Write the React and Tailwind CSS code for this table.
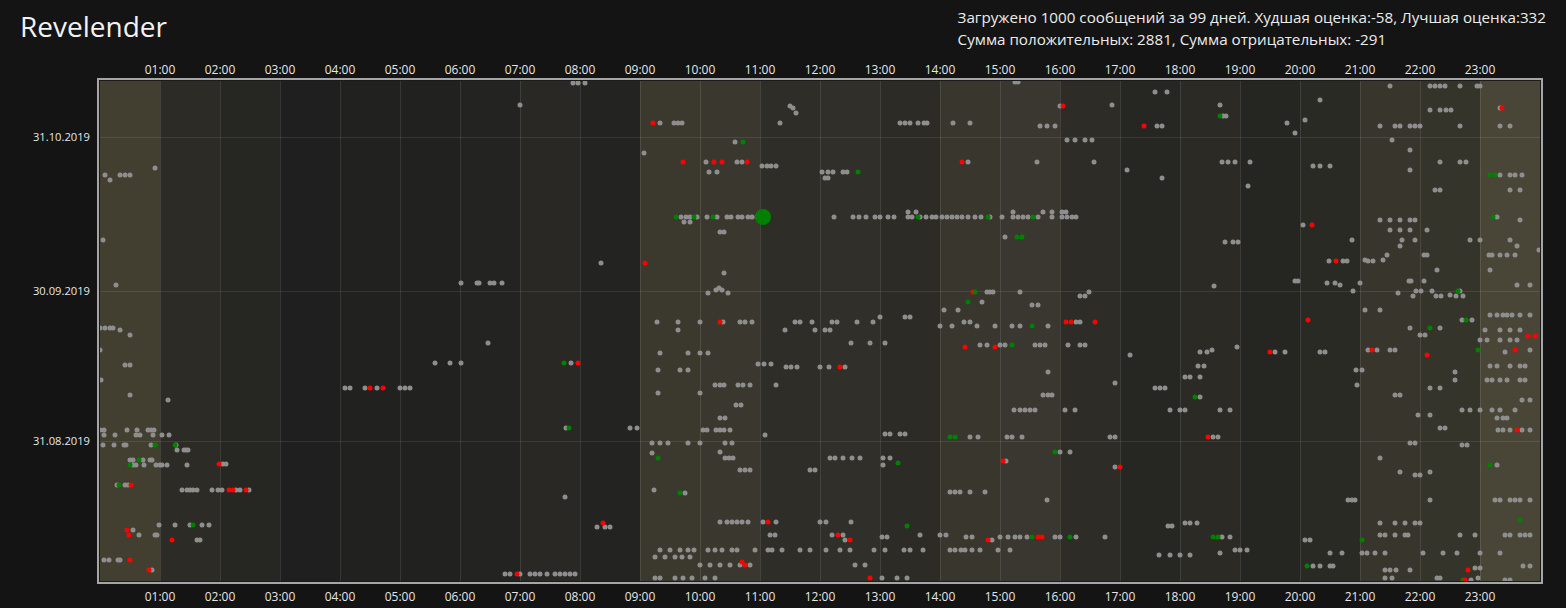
import React from "react";

const COLS = [
  "bg-[#423f31]", "bg-[#2c2b25]", "bg-[#262622]", "bg-[#1f1f1f]", "bg-[#212120]", "bg-[#212120]",
  "bg-[#232321]", "bg-[#292824]", "bg-[#232321]", "bg-[#3b392e]", "bg-[#3a382e]", "bg-[#2e2d28]",
  "bg-[#302f29]", "bg-[#2c2b26]", "bg-[#38362d]", "bg-[#393730]", "bg-[#2d2c27]", "bg-[#262622]",
  "bg-[#2b2a25]", "bg-[#252522]", "bg-[#2a2a25]", "bg-[#37352c]", "bg-[#35342b]", "bg-[#4a4637]",
];

const HOURS = Array.from({ length: 23 }, (_, i) => String(i + 1).padStart(2, "0") + ":00");

const ROWS = `
82: 1015 1018
83: 573 578 585
86: 1390 1430 1435 1440 1445 1460 1477 1480
92: 1155 1167
100: 1320
105: 520 1112 1220
106: 1060 r1063 790
108: 793 1500 r1502
110: 1430 1440 1446 1451
113: 796
116: g1220 1223 1226
120: 1305
123: r653 660 674 678 682 780 900 905 910 918 924 927 953 970 1287
126: 1040 1047 1055 r1144 1157 1162 1380 1395 1400 1410 1415 1420 1460 1500 1510
133: 1295
140: 1067 1075 1085 1092 1392
142: 735 g743
150: 1410
153: 644
162: r683 706 r714 r722 737 742 r747 r962 968 1037 1094 1222 1228 1235 1250 1440 1460 1466
166: 762 767 771 776 1313 1320 1330
168: 155
170: 1127 1410
172: 709 717 822 828 833 843 847 g858
175: 105 120 125 130 g1490 g1495 1500 1510 1515 1522
178: 825 828 1162
180: 110
186: 1248
190: 1435 1440 1510 1520
212: 1013 1043 1052 1062 1066 908 916
217: g676 681 686 690 g694 697 707 g713 717 727 731 738 742 748 752 757 834 853 859 866 875 880 888 894 908 912 g918 920 926 932 936 942 947 952 957 962 968 975 981 g988 990 1002 1013 1018 1023 1028 g1033 1038 1052 1062 1067 1072 1076 g1493 1497
220: 1380 1390 1400 1410 1415 1520
222: 684 690
225: 1303 r1312
230: 1390 1400 1410 1427
232: 720 724
237: 1005 g1017 g1022
240: 103 1352 1402 1415 1470 1480 1510
242: 1225 1233 1238
246: 1400 1517
250: 1539
255: 1387 1424 1427 1489 1492 1500 1507 1515
260: 1383 1365
261: 1329 r1336 1343 1347 1368 1373
263: 601 r645
270: 1437 1490
273: 724
281: 1295 1298 1409 1411 1424
283: 461 477 479 490 494 502 1327 1335 1360
285: 116 1517 1530 1340
286: 1214
288: 719
290: 716 722
291: 1353 1416 1421 1432 g1458 1460
292: 1089 r973 g975 987 990 993 1020
293: 708 728 1398
295: 1450
296: 1413 1436 1441 1456 1463 1085 1080
302: g968 982
305: 1032 1038
310: 944 958 1365 1380
315: 1490 1497 1503 1507 1512 1520 1530
317: 880 905 910
320: 1462 g1466 1472 r1308
322: 657 678 700 r720 723 740 745 752 795 800 812 832 837 857 873 964 970 r1066 r1071 1076 1080 r1095
326: 940 952 977 995 1012 1020 g1032 1048
328: 100 105 110 113 g1430 1440 1410
330: 120 678 785 815 825 830 1485 1500 1510 1520
335: 130 1420 1425
336: r1528 r1535
340: 1480 1487 1500 1510 1517
343: 488 851 870 885
345: 980 987 1000 1005 g1012 1035 1040 1045 1068 1080 1085
347: r965 r995 1237
350: 100 1212 1368 r1372 1377 1390 1395 g1478 1530 r1515
352: 1200 1207 r1270 1275 1285 1320 1325 1505
353: 660 688 700 708
355: r1427 1130
363: 435 450 461 g564 571 r578
364: 758 764 771
365: 125 130
366: 1198 1204 1490 1497 1510 1520 1525
367: 786 791 797 820 829 r840 845
370: 1356 1362 658 680 688
372: 1455 1048
377: 1185 1190 1200
380: 101 1455 1487 1492 1500 1507 1520 1525
383: 1115
385: 715 720 724 738 743 750 776 1357
388: 345 350 365 r370 377 r383 400 405 410 1155 1160 1165 1430 1440
393: 658 700
395: 130 1043 1048 1052 1395 1400
397: g1195 1200
400: 168 1522 1530
405: 736 741
410: 1014 1020 1025 1030 1035 1065 1075 1170 1180 1185 1220 1230 1462 1470 1480 1492 1500 1515
415: 1418 1430
418: 720 725 1497 1503 1507
428: 566 g569 630 637 1440 1445
430: 100 104 127 137 148 151 154 703 707 716 720 724 730 1498 1503 1510 r1517 1522 1530
434: 885 890 900 905
435: 104 115 136 140 153 162 169 765
437: g950 g955 970 978 1007 1012 1022 1110 1115 r1208 1213 1218
443: 652 660 668 688 700 725 732 1410 1415
445: 103 114 124 126 151 g155 g175 176 1462 1467
450: 177 184 186 188
452: g1055 1060 1070 720
453: 652
458: g658 725 729 733 830 835 843 852 860 883 890 1380
460: 130 133 g139 143 150 152
461: r1003 1006
463: g898
464: r219 223 226
465: g130 133 136 144 156 160 162 167 187 883 g1490 1497
467: 1115 r1120
470: 740 745 750 810 815
472: 1400 1430
475: 1415 1420
485: 117 g119 125 128 r131
490: 182 187 190 193 197 212 218 222 r229 r233 236 240 r246 249 654
492: 950 955 960 970 985
493: g680 685
497: 565
500: 1348 1352 1355 1430 1495 1500 1510 1515 1520 1530 1047
520: g1520
522: 720 727 732 737 742 748 763 r768 776 820 826 851
523: r603 1185 1190 1197 1380 1395 1405 1415 1420
525: 159 175 190 g193 202 209
526: 1168 1172 g907
527: 597 605 610
530: r127 133
535: r129 139 155 157 770 775 832 r838 843 920 940 946 1380 1385 1395 1405 1408 1460 1475 1505 1510 1520 1525 1530
537: 882 887 966 972 1000 1008 1015 1020 1027 g1032 r1038 r1042 1055 1060 g1070 1076 1105 g1213 g1218 1222 1230
540: r172 197 200 845 r850 r988 992 1305 1310 g1362
550: 660 670 680 688 694 708 715 722 732 737 755 768 772 782 800 810 826 840 850 874 885 904 910 923 950 955 961 965 972 980 998 1010 1235 1240 1247
553: 1220 1330 1342 1362 1367 1375 1385 1423 1443 1457 1480 1500
555: 1159 1170 1180 1190
557: 655 665 675 682 690
560: 104 109 118 120 r130
562: r742
565: 700 710 720 730 740 r745 750 855 865
566: g1307 1313 1320 1330 1333 1523 1530
568: 1475 1480
570: r149 152 1385 1390 1396 1410 r1468
574: 505 510 r517 520 530 535 540 547 555 560 565 570 575
578: 655 660 675 683 692 705 715 r870 882 897 907 1385 1392 1437 1440 1478
580: g1463 r1465 1471 1505 1510
`;

const GRAY = "#8e8e8e";

const DOTS = ROWS.trim()
  .split("\n")
  .flatMap((line) => {
    const [yStr, rest] = line.split(":");
    const y = Number(yStr);
    return rest
      .trim()
      .split(/\s+/)
      .map((t) => {
        let c = GRAY;
        let v = t;
        if (t[0] === "r") {
          c = "#ff0000";
          v = t.slice(1);
        } else if (t[0] === "g") {
          c = "#008000";
          v = t.slice(1);
        }
        return { x: Number(v), y, c };
      });
  });

const sorted = [...DOTS].sort((a, b) => (a.c === GRAY ? 0 : 1) - (b.c === GRAY ? 0 : 1));

const DATES = [
  { y: 137, t: "31.10.2019" },
  { y: 291, t: "30.09.2019" },
  { y: 441, t: "31.08.2019" },
];

const FONT = "font-['Open_Sans','Noto_Sans',sans-serif]";

export default function App() {
  return (
    <div className={`w-[1566px] h-[608px] bg-[#141414] text-[#e8e8e8] overflow-hidden ${FONT}`}>
      <div className="h-[62px] flex justify-between">
        <div className="pl-[20px] pt-[6px] text-[28px] leading-[40px] text-[#f2f2f2]">Revelender</div>
        <div className="pr-[20px] pt-[6px] text-[15.2px] leading-[22px] text-[#ececec] whitespace-nowrap">
          <div>Загружено 1000 сообщений за 99 дней. Худшая оценка:-58, Лучшая оценка:332</div>
          <div>Сумма положительных: 2881, Сумма отрицательных: -291</div>
        </div>
      </div>

      <div className="flex pl-[130px] h-[16px] text-[12px] leading-[16px] text-[#e6e6e6]">
        {HOURS.map((h) => (
          <div key={h} className="w-[60px] text-center shrink-0">{h}</div>
        ))}
      </div>

      <div className="flex">
        <div className="relative w-[97px] h-[506px] shrink-0 text-[11.2px] leading-[16px] text-[#e6e6e6]">
          {DATES.map((d) => (
            <div key={d.t} className="absolute right-[7px]" style={{ top: d.y - 78 - 8 }}>
              {d.t}
            </div>
          ))}
        </div>
        <div className="border-2 border-[#a6a6a6] bg-[#1b1b1b] p-px">
          <div className="relative w-[1440px] h-[500px] flex">
            {COLS.map((c, i) => (
              <div key={i} className={`w-[60px] h-full shrink-0 ${c} ${i > 0 ? "border-l border-white/10" : ""}`} />
            ))}
            <svg className="absolute inset-0" width="1440" height="500" viewBox="100 81 1440 500">
              {DATES.map((d) => (
                <line key={d.t} x1="100" x2="1540" y1={d.y + 0.5} y2={d.y + 0.5} stroke="rgba(255,255,255,0.09)" strokeWidth="1" />
              ))}
              {sorted.map((d, i) => (
                <circle key={i} cx={d.x} cy={d.y} r="2.5" fill={d.c} />
              ))}
              <circle cx="763" cy="217" r="8" fill="#008000" />
            </svg>
          </div>
        </div>
      </div>

      <div className="flex pl-[130px] mt-[5px] h-[16px] text-[12px] leading-[16px] text-[#e6e6e6]">
        {HOURS.map((h) => (
          <div key={h} className="w-[60px] text-center shrink-0">{h}</div>
        ))}
      </div>
    </div>
  );
}
